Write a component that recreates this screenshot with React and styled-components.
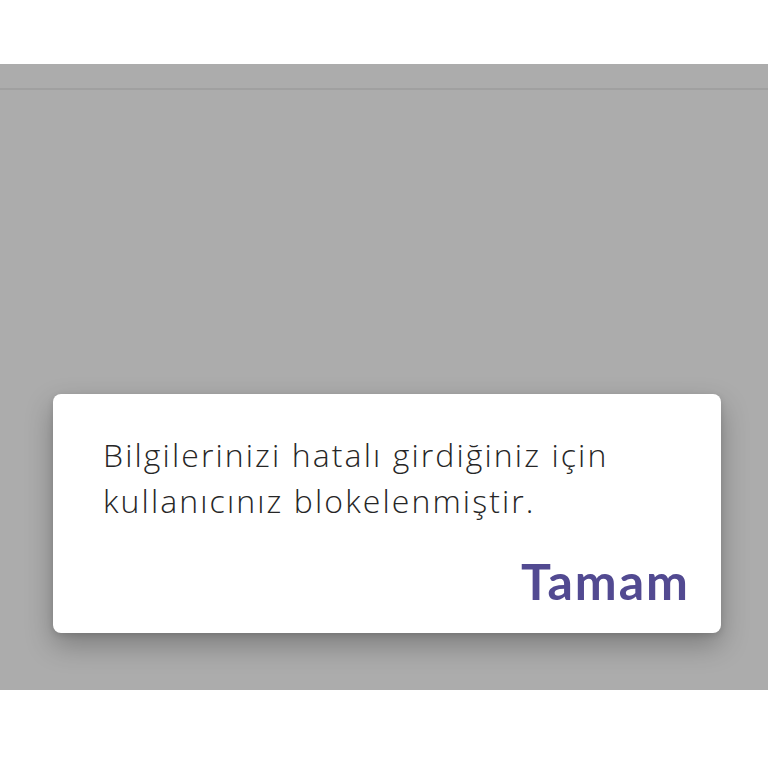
import React from 'react';
import styled, { createGlobalStyle } from 'styled-components';

const GlobalStyle = createGlobalStyle`
  html, body {
    margin: 0;
    padding: 0;
    background: #ffffff;
  }
  body {
    font-family: "Open Sans", "Liberation Sans", sans-serif;
  }
`;

const Screen = styled.div`
  width: 768px;
  height: 768px;
  display: flex;
  flex-direction: column;
  background: #ffffff;
  overflow: hidden;
`;

const TopBar = styled.div`
  height: 64px;
  flex-shrink: 0;
  background: #ffffff;
`;

const Overlay = styled.div`
  height: 626px;
  flex-shrink: 0;
  background: #acacac;
  display: flex;
  flex-direction: column;
`;

const Divider = styled.div`
  height: 2px;
  margin-top: 24px;
  background: #a0a0a0;
`;

const DialogArea = styled.div`
  padding: 304px 47px 0 53px;
`;

// Alert card with message and a single action
const Dialog = styled.div`
  height: 239px;
  box-sizing: border-box;
  background: #ffffff;
  border-radius: 8px;
  box-shadow: 0 12px 28px rgba(0, 0, 0, 0.28), 0 2px 6px rgba(0, 0, 0, 0.12);
  padding: 38px 33px 0 50px;
  display: flex;
  flex-direction: column;
`;

const Message = styled.p`
  margin: 0;
  font-size: 32px;
  line-height: 46px;
  font-weight: 300;
  letter-spacing: 2.1px;
  color: #262626;
`;

const Actions = styled.div`
  display: flex;
  justify-content: flex-end;
  margin-top: 29px;
`;

const ActionButton = styled.button`
  border: none;
  background: none;
  padding: 0;
  margin-right: -2px;
  font-family: Lato, "Liberation Sans", sans-serif;
  font-size: 50px;
  line-height: 56px;
  font-weight: 700;
  letter-spacing: 2px;
  color: #524a91;
  cursor: pointer;
`;

export default function App() {
  return (
    <Screen>
      <GlobalStyle />
      <TopBar />
      <Overlay>
        <Divider />
        <DialogArea>
          <Dialog>
            <Message>
              Bilgilerinizi hatalı girdiğiniz için
              <br />
              kullanıcınız blokelenmiştir.
            </Message>
            <Actions>
              <ActionButton>Tamam</ActionButton>
            </Actions>
          </Dialog>
        </DialogArea>
      </Overlay>
    </Screen>
  );
}
